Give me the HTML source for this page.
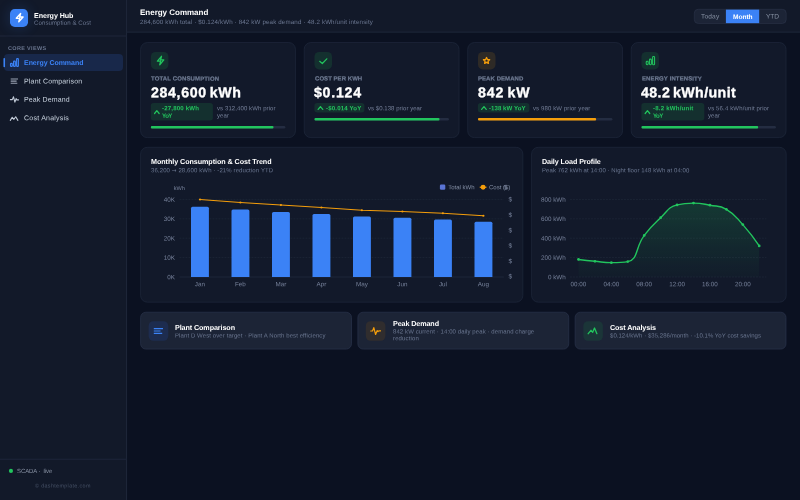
<!DOCTYPE html>
<html lang="en">
<head>
<meta charset="utf-8">
<title>Energy Hub — Energy Command</title>
<style>
*{box-sizing:border-box;margin:0;padding:0}
html,body{width:800px;height:500px;overflow:hidden;background:#0b1121}
body{font-family:"Liberation Sans",Arial,sans-serif;color:#f8fafc;position:relative}
.abs{position:absolute}
.t{position:absolute;white-space:nowrap;line-height:1;transform-origin:0 0}
#logo{position:absolute;left:10px;top:9px;width:18px;height:18px;border-radius:4.8px;background:#3b82f6;box-shadow:0 0 13px rgba(59,130,246,.22)}
svg text{font-family:"Liberation Sans",Arial,sans-serif}
.ax{font-size:6.3px;fill:#76819a}
.axl{stroke:#242d40;stroke-width:.7}
.lg{font-size:6px;fill:#8590a6}
.gr{stroke:#20293b;stroke-width:.65;stroke-dasharray:1.9 1.1}
.layer{position:absolute;left:0;top:0;width:800px;height:500px}
#charts,#tx{will-change:transform}
</style>
</head>
<body>

<!-- panels, cards, bars: background geometry -->
<svg class="layer" id="bg" viewBox="0 0 800 500">
<rect x="0.00" y="0.00" width="126.40" height="500.00" rx="0.00" fill="#121929"/>
<rect x="126.40" y="0.00" width="673.60" height="32.50" rx="0.00" fill="#121929"/>
<rect x="125.95" y="0.00" width="1.10" height="500.00" rx="0.00" fill="#1d2538"/>
<rect x="126.40" y="31.55" width="673.60" height="1.10" rx="0.00" fill="#1d2538"/>
<rect x="0.00" y="35.45" width="126.40" height="1.10" rx="0.00" fill="#1d2538"/>
<rect x="0.00" y="458.70" width="126.40" height="1.10" rx="0.00" fill="#1d2538"/>
<rect x="4.00" y="54.05" width="119.00" height="16.85" rx="4.00" fill="#18284a"/>
<rect x="3.45" y="57.90" width="1.60" height="9.30" rx="0.80" fill="#3b82f6"/>
<circle cx="10.95" cy="470.9" r="2.05" fill="#22c55e"/>
<rect x="694.30" y="9.30" width="91.90" height="14.15" rx="3.90" fill="#1c2436" stroke="#2b3449" stroke-width="0.60"/>
<rect x="725.90" y="9.60" width="33.30" height="13.55" rx="0.00" fill="#3b82f6"/>
<rect x="140.60" y="42.55" width="154.85" height="95.05" rx="6.70" fill="#12192a" stroke="#212b40" stroke-width="0.60"/>
<rect x="150.90" y="52.00" width="17.50" height="17.45" rx="4.60" fill="#14302f"/>
<rect x="150.80" y="103.05" width="62.10" height="17.50" rx="2.80" fill="#14302f"/>
<rect x="150.90" y="126.00" width="134.40" height="2.40" rx="1.20" fill="#242d42"/>
<rect x="150.90" y="126.00" width="122.57" height="2.40" rx="1.00" fill="#22c55e"/>
<rect x="304.20" y="42.55" width="154.85" height="95.05" rx="6.70" fill="#12192a" stroke="#212b40" stroke-width="0.60"/>
<rect x="314.50" y="52.00" width="17.50" height="17.45" rx="4.60" fill="#14302f"/>
<rect x="314.40" y="103.05" width="50.00" height="9.50" rx="2.80" fill="#14302f"/>
<rect x="314.50" y="118.00" width="134.40" height="2.40" rx="1.20" fill="#242d42"/>
<rect x="314.50" y="118.00" width="124.99" height="2.40" rx="1.00" fill="#22c55e"/>
<rect x="467.70" y="42.55" width="154.85" height="95.05" rx="6.70" fill="#12192a" stroke="#212b40" stroke-width="0.60"/>
<rect x="478.00" y="52.00" width="17.50" height="17.45" rx="4.60" fill="#2e2a26"/>
<rect x="477.90" y="103.05" width="51.50" height="9.50" rx="2.80" fill="#14302f"/>
<rect x="478.00" y="118.00" width="134.40" height="2.40" rx="1.20" fill="#242d42"/>
<rect x="478.00" y="118.00" width="118.14" height="2.40" rx="1.00" fill="#f59e0b"/>
<rect x="631.20" y="42.55" width="154.85" height="95.05" rx="6.70" fill="#12192a" stroke="#212b40" stroke-width="0.60"/>
<rect x="641.50" y="52.00" width="17.50" height="17.45" rx="4.60" fill="#14302f"/>
<rect x="641.40" y="103.05" width="62.90" height="17.50" rx="2.80" fill="#14302f"/>
<rect x="641.50" y="126.00" width="134.40" height="2.40" rx="1.20" fill="#242d42"/>
<rect x="641.50" y="126.00" width="116.66" height="2.40" rx="1.00" fill="#22c55e"/>
<rect x="140.60" y="147.30" width="382.25" height="154.90" rx="6.70" fill="#12192a" stroke="#212b40" stroke-width="0.60"/>
<rect x="531.60" y="147.30" width="254.60" height="154.90" rx="6.70" fill="#12192a" stroke="#212b40" stroke-width="0.60"/>
<rect x="140.60" y="312.20" width="210.90" height="36.90" rx="5.30" fill="#1c2436" stroke="#2e3850" stroke-width="0.60"/>
<rect x="148.65" y="321.20" width="19.60" height="19.60" rx="4.80" fill="#1d2c4f"/>
<rect x="357.85" y="312.20" width="210.90" height="36.90" rx="5.30" fill="#1c2436" stroke="#2e3850" stroke-width="0.60"/>
<rect x="365.80" y="321.20" width="19.60" height="19.60" rx="4.80" fill="#302d2e"/>
<rect x="575.10" y="312.20" width="210.90" height="36.90" rx="5.30" fill="#1c2436" stroke="#2e3850" stroke-width="0.60"/>
<rect x="583.30" y="321.20" width="19.60" height="19.60" rx="4.80" fill="#1b3538"/>
</svg>
<div id="logo"></div>

<!-- charts -->
<svg class="layer" id="charts" viewBox="0 0 800 500">
<defs><linearGradient id="ga" gradientUnits="userSpaceOnUse" x1="0" y1="203" x2="0" y2="277"><stop offset="0" stop-color="#22c55e" stop-opacity=".19"/><stop offset="1" stop-color="#22c55e" stop-opacity=".02"/></linearGradient></defs>
<line x1="179.5" x2="503.8" y1="277.00" y2="277.00" class="axl"/>
<text x="175.00" y="279.25" class="ax" text-anchor="end" transform="rotate(.03 175.00 279.25)">0K</text>
<line x1="179.5" x2="503.8" y1="257.60" y2="257.60" class="gr"/>
<text x="175.00" y="259.85" class="ax" text-anchor="end" transform="rotate(.03 175.00 259.85)">10K</text>
<line x1="179.5" x2="503.8" y1="238.20" y2="238.20" class="gr"/>
<text x="175.00" y="240.45" class="ax" text-anchor="end" transform="rotate(.03 175.00 240.45)">20K</text>
<line x1="179.5" x2="503.8" y1="218.80" y2="218.80" class="gr"/>
<text x="175.00" y="221.05" class="ax" text-anchor="end" transform="rotate(.03 175.00 221.05)">30K</text>
<line x1="179.5" x2="503.8" y1="199.40" y2="199.40" class="gr"/>
<text x="175.00" y="201.65" class="ax" text-anchor="end" transform="rotate(.03 175.00 201.65)">40K</text>
<path d="M191.00 277.00 V208.27 Q191.00 206.77 192.50 206.77 H207.40 Q208.90 206.77 208.90 208.27 V277.00 Z" fill="#3b82f6"/>
<text x="199.95" y="286.20" class="ax" text-anchor="middle" transform="rotate(.03 199.95 286.20)">Jan</text>
<path d="M231.50 277.00 V210.99 Q231.50 209.49 233.00 209.49 H247.90 Q249.40 209.49 249.40 210.99 V277.00 Z" fill="#3b82f6"/>
<text x="240.45" y="286.20" class="ax" text-anchor="middle" transform="rotate(.03 240.45 286.20)">Feb</text>
<path d="M272.00 277.00 V213.51 Q272.00 212.01 273.50 212.01 H288.40 Q289.90 212.01 289.90 213.51 V277.00 Z" fill="#3b82f6"/>
<text x="280.95" y="286.20" class="ax" text-anchor="middle" transform="rotate(.03 280.95 286.20)">Mar</text>
<path d="M312.50 277.00 V215.45 Q312.50 213.95 314.00 213.95 H328.90 Q330.40 213.95 330.40 215.45 V277.00 Z" fill="#3b82f6"/>
<text x="321.45" y="286.20" class="ax" text-anchor="middle" transform="rotate(.03 321.45 286.20)">Apr</text>
<path d="M353.00 277.00 V217.97 Q353.00 216.47 354.50 216.47 H369.40 Q370.90 216.47 370.90 217.97 V277.00 Z" fill="#3b82f6"/>
<text x="361.95" y="286.20" class="ax" text-anchor="middle" transform="rotate(.03 361.95 286.20)">May</text>
<path d="M393.50 277.00 V219.33 Q393.50 217.83 395.00 217.83 H409.90 Q411.40 217.83 411.40 219.33 V277.00 Z" fill="#3b82f6"/>
<text x="402.45" y="286.20" class="ax" text-anchor="middle" transform="rotate(.03 402.45 286.20)">Jun</text>
<path d="M434.00 277.00 V220.88 Q434.00 219.38 435.50 219.38 H450.40 Q451.90 219.38 451.90 220.88 V277.00 Z" fill="#3b82f6"/>
<text x="442.95" y="286.20" class="ax" text-anchor="middle" transform="rotate(.03 442.95 286.20)">Jul</text>
<path d="M474.50 277.00 V223.31 Q474.50 221.81 476.00 221.81 H490.90 Q492.40 221.81 492.40 223.31 V277.00 Z" fill="#3b82f6"/>
<text x="483.45" y="286.20" class="ax" text-anchor="middle" transform="rotate(.03 483.45 286.20)">Aug</text>
<text x="508.50" y="201.60" class="ax" transform="rotate(.03 508.50 201.60)">$</text>
<text x="508.50" y="217.00" class="ax" transform="rotate(.03 508.50 217.00)">$</text>
<text x="508.50" y="232.40" class="ax" transform="rotate(.03 508.50 232.40)">$</text>
<text x="508.50" y="247.80" class="ax" transform="rotate(.03 508.50 247.80)">$</text>
<text x="508.50" y="263.20" class="ax" transform="rotate(.03 508.50 263.20)">$</text>
<text x="508.50" y="278.60" class="ax" transform="rotate(.03 508.50 278.60)">$</text>
<path d="M200.00 199.50 L240.40 202.50 L280.90 205.00 L321.40 207.50 L361.90 210.25 L402.40 211.50 L442.90 213.25 L483.40 215.75" fill="none" stroke="#f59e0b" stroke-width="1.1"/>
<circle cx="200.00" cy="199.50" r="1.1" fill="#f59e0b"/>
<circle cx="240.40" cy="202.50" r="1.1" fill="#f59e0b"/>
<circle cx="280.90" cy="205.00" r="1.1" fill="#f59e0b"/>
<circle cx="321.40" cy="207.50" r="1.1" fill="#f59e0b"/>
<circle cx="361.90" cy="210.25" r="1.1" fill="#f59e0b"/>
<circle cx="402.40" cy="211.50" r="1.1" fill="#f59e0b"/>
<circle cx="442.90" cy="213.25" r="1.1" fill="#f59e0b"/>
<circle cx="483.40" cy="215.75" r="1.1" fill="#f59e0b"/>
<text x="173.80" y="190.10" class="ax" transform="rotate(.03 173.80 190.10)" style="font-size:5.6px">kWh</text>
<rect x="439.9" y="184.4" width="5.4" height="5.4" rx="1.3" fill="#5a74d4"/>
<text x="448.20" y="189.30" class="lg" transform="rotate(.03 448.20 189.30)">Total kWh</text>
<line x1="479.7" x2="486.5" y1="187.2" y2="187.2" stroke="#f59e0b" stroke-width="1.1"/><circle cx="483.1" cy="187.2" r="2.45" fill="#f59e0b"/>
<text x="489.00" y="189.30" class="lg" transform="rotate(.03 489.00 189.30)">Cost ($)</text>
<text x="503.60" y="189.40" class="ax" transform="rotate(.03 503.60 189.40)">$</text>
<line x1="570" x2="766.4" y1="277.00" y2="277.00" class="gr"/>
<text x="565.80" y="279.25" class="ax" text-anchor="end" transform="rotate(.03 565.80 279.25)">0 kWh</text>
<line x1="570" x2="766.4" y1="257.60" y2="257.60" class="gr"/>
<text x="565.80" y="259.85" class="ax" text-anchor="end" transform="rotate(.03 565.80 259.85)">200 kWh</text>
<line x1="570" x2="766.4" y1="238.20" y2="238.20" class="gr"/>
<text x="565.80" y="240.45" class="ax" text-anchor="end" transform="rotate(.03 565.80 240.45)">400 kWh</text>
<line x1="570" x2="766.4" y1="218.80" y2="218.80" class="gr"/>
<text x="565.80" y="221.05" class="ax" text-anchor="end" transform="rotate(.03 565.80 221.05)">600 kWh</text>
<line x1="570" x2="766.4" y1="199.40" y2="199.40" class="gr"/>
<text x="565.80" y="201.65" class="ax" text-anchor="end" transform="rotate(.03 565.80 201.65)">800 kWh</text>
<text x="578.50" y="286.20" class="ax" text-anchor="middle" transform="rotate(.03 578.50 286.20)">00:00</text>
<text x="611.36" y="286.20" class="ax" text-anchor="middle" transform="rotate(.03 611.36 286.20)">04:00</text>
<text x="644.22" y="286.20" class="ax" text-anchor="middle" transform="rotate(.03 644.22 286.20)">08:00</text>
<text x="677.08" y="286.20" class="ax" text-anchor="middle" transform="rotate(.03 677.08 286.20)">12:00</text>
<text x="709.94" y="286.20" class="ax" text-anchor="middle" transform="rotate(.03 709.94 286.20)">16:00</text>
<text x="742.80" y="286.20" class="ax" text-anchor="middle" transform="rotate(.03 742.80 286.20)">20:00</text>
<path d="M578.50 259.44 C578.50 259.44 586.70 260.48 594.93 261.29 C603.13 262.09 603.14 262.64 611.36 262.64 C619.57 262.64 622.08 262.64 627.79 261.58 C638.51 259.57 635.00 247.71 644.22 235.39 C651.43 225.74 651.81 225.83 660.65 217.64 C668.24 210.60 667.93 207.24 677.08 204.93 C684.36 203.09 685.30 203.09 693.51 203.09 C701.73 203.09 701.81 203.68 709.94 205.22 C718.24 206.79 719.31 205.22 726.37 209.29 C735.74 214.70 735.33 216.28 742.80 224.62 C751.76 234.61 759.23 245.96 759.23 245.96 L759.23 277.00 L578.50 277.00 Z" fill="url(#ga)"/>
<path d="M578.50 259.44 C578.50 259.44 586.70 260.48 594.93 261.29 C603.13 262.09 603.14 262.64 611.36 262.64 C619.57 262.64 622.08 262.64 627.79 261.58 C638.51 259.57 635.00 247.71 644.22 235.39 C651.43 225.74 651.81 225.83 660.65 217.64 C668.24 210.60 667.93 207.24 677.08 204.93 C684.36 203.09 685.30 203.09 693.51 203.09 C701.73 203.09 701.81 203.68 709.94 205.22 C718.24 206.79 719.31 205.22 726.37 209.29 C735.74 214.70 735.33 216.28 742.80 224.62 C751.76 234.61 759.23 245.96 759.23 245.96" fill="none" stroke="#22c55e" stroke-width="1.4" stroke-linejoin="round" stroke-linecap="round"/>
<circle cx="578.50" cy="259.44" r="1.35" fill="#22c55e"/>
<circle cx="594.93" cy="261.29" r="1.35" fill="#22c55e"/>
<circle cx="611.36" cy="262.64" r="1.35" fill="#22c55e"/>
<circle cx="627.79" cy="261.58" r="1.35" fill="#22c55e"/>
<circle cx="644.22" cy="235.39" r="1.35" fill="#22c55e"/>
<circle cx="660.65" cy="217.64" r="1.35" fill="#22c55e"/>
<circle cx="677.08" cy="204.93" r="1.35" fill="#22c55e"/>
<circle cx="693.51" cy="203.09" r="1.35" fill="#22c55e"/>
<circle cx="709.94" cy="205.22" r="1.35" fill="#22c55e"/>
<circle cx="726.37" cy="209.29" r="1.35" fill="#22c55e"/>
<circle cx="742.80" cy="224.62" r="1.35" fill="#22c55e"/>
<circle cx="759.23" cy="245.96" r="1.35" fill="#22c55e"/>
</svg>

<!-- icons -->
<svg class="layer" id="icons" viewBox="0 0 800 500" fill="none" stroke-linejoin="round" stroke-linecap="round">
<path d="M16.30 18.34 L20.63 13.55 L19.70 17.06 L23.10 17.06 L18.77 21.85 L19.70 18.34Z" stroke="#fff" stroke-width="1.40"/>
<path d="M157.40 61.20 L161.47 56.30 L160.60 59.90 L163.80 59.90 L159.73 64.80 L160.60 61.20Z" stroke="#22c55e" stroke-width="1.30"/>
<path d="M319.7 61.3L322.3 63.5L326.8 58.8" stroke="#22c55e" stroke-width="1.2"/>
<path d="M486.55 57.50 L487.46 59.50 L489.64 59.75 L488.02 61.23 L488.46 63.38 L486.55 62.30 L484.64 63.38 L485.08 61.23 L483.46 59.75 L485.64 59.50Z" stroke="#f59e0b" stroke-width="1.35"/>
<rect x="646.23" y="61.32" width="1.95" height="3.35" rx="0.80" stroke="#22c55e" stroke-width="1.05"/><rect x="649.43" y="59.12" width="1.95" height="5.55" rx="0.80" stroke="#22c55e" stroke-width="1.05"/><rect x="652.62" y="56.48" width="1.95" height="8.20" rx="0.80" stroke="#22c55e" stroke-width="1.05"/>
<path d="M154.55 113.50 L156.85 110.70 L159.15 113.50" stroke="#22c55e" stroke-width="1.25"/>
<path d="M318.15 109.40 L320.45 106.60 L322.75 109.40" stroke="#22c55e" stroke-width="1.25"/>
<path d="M481.65 109.40 L483.95 106.60 L486.25 109.40" stroke="#22c55e" stroke-width="1.25"/>
<path d="M645.15 113.50 L647.45 110.70 L649.75 113.50" stroke="#22c55e" stroke-width="1.25"/>
<path d="M153.8 328.6H163M153.8 331H160.5M153.8 333.4H162.2" stroke="#3b82f6" stroke-width="1.15" stroke-linecap="butt"/>
<path d="M370.7 331H372.5L373.8 327.6L375.6 334.5L377.2 330.5L378 331.7L378.8 330.8H380.5" stroke="#f59e0b" stroke-width="1.2"/>
<path d="M588.2 333.7L591 330.3L592.7 332.3L594.5 328L596.9 333.7" stroke="#22c55e" stroke-width="1.3"/>
<rect x="10.52" y="63.38" width="1.75" height="2.95" rx="0.60" stroke="#3b82f6" stroke-width="1.15"/><rect x="13.57" y="61.18" width="1.75" height="5.15" rx="0.60" stroke="#3b82f6" stroke-width="1.15"/><rect x="16.62" y="58.68" width="1.75" height="7.65" rx="0.60" stroke="#3b82f6" stroke-width="1.15"/>
<path d="M10.7 78.95H18M10.7 81.1H16.6M10.7 83.25H17.3" stroke="#9aa3b3" stroke-width="1.15" stroke-linecap="butt"/>
<path d="M10.4 99.6H12.3L13.5 96.8L14.9 102.1L16.1 98.6L16.8 99.9H18.5" stroke="#c3ccd9" stroke-width="1.1"/>
<path d="M10.3 120.4L12.2 117.3L13.9 119.3L15.7 116.8L17.9 120.4" stroke="#c3ccd9" stroke-width="1.1"/>
</svg>

<!-- text -->
<div class="layer" id="tx">
<aside>
<div class="t" style="left:33.70px;top:13px;font-size:7.15px;font-weight:700;color:#ffffff;letter-spacing:-0.071px;transform:translateY(0.00px) rotate(.03deg)">Energy Hub</div>
<div class="t" style="left:33.70px;top:19px;font-size:6.1px;font-weight:400;color:#6b7791;letter-spacing:0.069px;transform:translateY(0.80px) rotate(.03deg)">Consumption &amp; Cost</div>
<div class="t" style="left:7.90px;top:46px;font-size:5.5px;font-weight:700;color:#6b7791;letter-spacing:0.331px;word-spacing:0;transform:translateY(0.10px) rotate(.03deg)">CORE VIEWS</div>
<div class="t" style="left:23.70px;top:59px;font-size:7px;font-weight:700;color:#3b82f6;letter-spacing:-0.038px;word-spacing:0;transform:translateY(0.00px) rotate(.03deg)">Energy Command</div>
<div class="t" style="left:23.70px;top:77px;font-size:7px;font-weight:400;color:#cbd5e1;letter-spacing:0.172px;transform:translateY(0.45px) rotate(.03deg)">Plant Comparison</div>
<div class="t" style="left:23.70px;top:95px;font-size:7px;font-weight:400;color:#cbd5e1;letter-spacing:0.128px;transform:translateY(0.85px) rotate(.03deg)">Peak Demand</div>
<div class="t" style="left:23.70px;top:114px;font-size:7px;font-weight:400;color:#cbd5e1;letter-spacing:0.237px;transform:translateY(0.25px) rotate(.03deg)">Cost Analysis</div>
<div class="t" style="left:16.70px;top:468px;font-size:6px;font-weight:400;color:#8b95a7;letter-spacing:-0.084px;transform:translateY(0.10px) rotate(.03deg)">SCADA ·&nbsp; live</div>
<div class="t" style="left:35.40px;top:483px;font-size:5.4px;font-weight:400;color:#465166;letter-spacing:0.347px;transform:translateY(0.40px) rotate(.03deg)">© dashtemplate.com</div>
</aside>
<header>
<div class="t" style="left:140.20px;top:9px;font-size:8px;font-weight:700;color:#ffffff;letter-spacing:-0.013px;transform:translateY(0.00px) rotate(.03deg)">Energy Command</div>
<div class="t" style="left:140.30px;top:19px;font-size:6.2px;font-weight:400;color:#6b7791;letter-spacing:0.145px;transform:translateY(0.00px) rotate(.03deg)">284,600 kWh total · $0.124/kWh · 842 kW peak demand · 48.2 kWh/unit intensity</div>
<div class="t" style="left:700.85px;top:13px;font-size:6.6px;font-weight:400;color:#8791a3;letter-spacing:0.153px;transform:translateY(0.60px) rotate(.03deg)">Today</div>
<div class="t" style="left:732.70px;top:14px;font-size:6.6px;font-weight:700;color:#ffffff;letter-spacing:-0.040px;transform:translateY(0.00px) rotate(.03deg)">Month</div>
<div class="t" style="left:766.00px;top:13px;font-size:6.6px;font-weight:400;color:#8791a3;letter-spacing:-0.075px;transform:translateY(0.60px) rotate(.03deg)">YTD</div>
</header>
<section class="kpi">
<div class="t" style="left:150.90px;top:75px;font-size:6px;font-weight:700;color:#6f7b93;letter-spacing:0.127px;-webkit-text-stroke:.2px #6f7b93;transform:translateY(0.60px) rotate(.03deg)">TOTAL CONSUMPTION</div>
<div class="t" style="left:150.70px;top:85px;font-size:14.2px;font-weight:700;color:#ffffff;letter-spacing:0.635px;-webkit-text-stroke:.35px #fff;word-spacing:-1.6px;transform:translateY(0.25px) rotate(.03deg)">284,600 kWh</div>
<div class="t" style="left:162.00px;top:105px;font-size:6.1px;font-weight:700;color:#22c55e;letter-spacing:0.178px;transform:translateY(0.25px) rotate(.03deg)">-27,800 kWh</div>
<div class="t" style="left:216.60px;top:105px;font-size:6px;font-weight:400;color:#76819a;letter-spacing:0.097px;transform:translateY(0.25px) rotate(.03deg)">vs 312,400 kWh prior</div>
<div class="t" style="left:162.00px;top:112px;font-size:6.1px;font-weight:700;color:#22c55e;letter-spacing:-0.483px;transform:translateY(0.85px) rotate(.03deg)">YoY</div>
<div class="t" style="left:216.60px;top:112px;font-size:6px;font-weight:400;color:#76819a;letter-spacing:0.122px;transform:translateY(0.60px) rotate(.03deg)">year</div>
<div class="t" style="left:314.50px;top:75px;font-size:6px;font-weight:700;color:#6f7b93;letter-spacing:0.046px;-webkit-text-stroke:.2px #6f7b93;transform:translateY(0.60px) rotate(.03deg)">COST PER KWH</div>
<div class="t" style="left:314.30px;top:85px;font-size:14.2px;font-weight:700;color:#ffffff;letter-spacing:0.726px;-webkit-text-stroke:.35px #fff;word-spacing:-1.6px;transform:translateY(0.25px) rotate(.03deg)">$0.124</div>
<div class="t" style="left:325.60px;top:105px;font-size:6.1px;font-weight:700;color:#22c55e;letter-spacing:0.157px;transform:translateY(0.25px) rotate(.03deg)">-$0.014 YoY</div>
<div class="t" style="left:368.00px;top:105px;font-size:6px;font-weight:400;color:#76819a;letter-spacing:0.050px;transform:translateY(0.25px) rotate(.03deg)">vs $0.138 prior year</div>
<div class="t" style="left:478.00px;top:75px;font-size:6px;font-weight:700;color:#6f7b93;letter-spacing:0.060px;-webkit-text-stroke:.2px #6f7b93;transform:translateY(0.60px) rotate(.03deg)">PEAK DEMAND</div>
<div class="t" style="left:477.80px;top:85px;font-size:14.2px;font-weight:700;color:#ffffff;letter-spacing:0.873px;-webkit-text-stroke:.35px #fff;word-spacing:-1.6px;transform:translateY(0.25px) rotate(.03deg)">842 kW</div>
<div class="t" style="left:489.10px;top:105px;font-size:6.1px;font-weight:700;color:#22c55e;letter-spacing:0.046px;transform:translateY(0.25px) rotate(.03deg)">-138 kW YoY</div>
<div class="t" style="left:533.00px;top:105px;font-size:6px;font-weight:400;color:#76819a;letter-spacing:0.121px;transform:translateY(0.25px) rotate(.03deg)">vs 980 kW prior year</div>
<div class="t" style="left:641.50px;top:75px;font-size:6px;font-weight:700;color:#6f7b93;letter-spacing:0.107px;-webkit-text-stroke:.2px #6f7b93;transform:translateY(0.60px) rotate(.03deg)">ENERGY INTENSITY</div>
<div class="t" style="left:641.30px;top:85px;font-size:14.2px;font-weight:700;color:#ffffff;letter-spacing:0.412px;-webkit-text-stroke:.35px #fff;word-spacing:-1.6px;transform:translateY(0.25px) rotate(.03deg)">48.2 kWh/unit</div>
<div class="t" style="left:652.60px;top:105px;font-size:6.1px;font-weight:700;color:#22c55e;letter-spacing:0.206px;transform:translateY(0.25px) rotate(.03deg)">-8.2 kWh/unit</div>
<div class="t" style="left:707.50px;top:105px;font-size:6px;font-weight:400;color:#76819a;letter-spacing:0.147px;transform:translateY(0.25px) rotate(.03deg)">vs 56.4 kWh/unit prior</div>
<div class="t" style="left:652.60px;top:112px;font-size:6.1px;font-weight:700;color:#22c55e;letter-spacing:-0.602px;transform:translateY(0.85px) rotate(.03deg)">YoY</div>
<div class="t" style="left:707.50px;top:112px;font-size:6px;font-weight:400;color:#76819a;letter-spacing:0.122px;transform:translateY(0.60px) rotate(.03deg)">year</div>
</section>
<section class="charts">
<div class="t" style="left:150.80px;top:158px;font-size:7.2px;font-weight:700;color:#ffffff;letter-spacing:-0.066px;transform:translateY(0.00px) rotate(.03deg)">Monthly Consumption &amp; Cost Trend</div>
<div class="t" style="left:150.80px;top:167px;font-size:6px;font-weight:400;color:#6b7791;letter-spacing:0.115px;transform:translateY(0.30px) rotate(.03deg)">36,200 <span style="font-family:'DejaVu Sans',sans-serif;font-size:5.6px">→</span> 28,600 kWh · -21% reduction YTD</div>
<div class="t" style="left:541.70px;top:158px;font-size:7.2px;font-weight:700;color:#ffffff;letter-spacing:-0.110px;transform:translateY(0.00px) rotate(.03deg)">Daily Load Profile</div>
<div class="t" style="left:541.70px;top:167px;font-size:6px;font-weight:400;color:#6b7791;letter-spacing:0.069px;transform:translateY(0.30px) rotate(.03deg)">Peak 762 kWh at 14:00 · Night floor 148 kWh at 04:00</div>
</section>
<section class="links">
<div class="t" style="left:175.00px;top:324px;font-size:7.2px;font-weight:700;color:#ffffff;letter-spacing:-0.098px;transform:translateY(0.00px) rotate(.03deg)">Plant Comparison</div>
<div class="t" style="left:175.00px;top:332px;font-size:6px;font-weight:400;color:#6b7791;letter-spacing:0.096px;transform:translateY(0.40px) rotate(.03deg)">Plant D West over target · Plant A North best efficiency</div>
<div class="t" style="left:392.60px;top:320px;font-size:7.2px;font-weight:700;color:#ffffff;letter-spacing:-0.109px;transform:translateY(0.00px) rotate(.03deg)">Peak Demand</div>
<div class="t" style="left:392.60px;top:328px;font-size:6px;font-weight:400;color:#6b7791;letter-spacing:0.092px;transform:translateY(0.40px) rotate(.03deg)">842 kW current · 14:00 daily peak · demand charge</div>
<div class="t" style="left:392.60px;top:335px;font-size:6px;font-weight:400;color:#6b7791;letter-spacing:0.143px;transform:translateY(0.30px) rotate(.03deg)">reduction</div>
<div class="t" style="left:609.70px;top:324px;font-size:7.2px;font-weight:700;color:#ffffff;letter-spacing:-0.102px;transform:translateY(0.00px) rotate(.03deg)">Cost Analysis</div>
<div class="t" style="left:609.70px;top:332px;font-size:6px;font-weight:400;color:#6b7791;letter-spacing:0.044px;transform:translateY(0.40px) rotate(.03deg)">$0.124/kWh · $35,286/month · -10.1% YoY cost savings</div>
</section>
</div>

</body>
</html>
